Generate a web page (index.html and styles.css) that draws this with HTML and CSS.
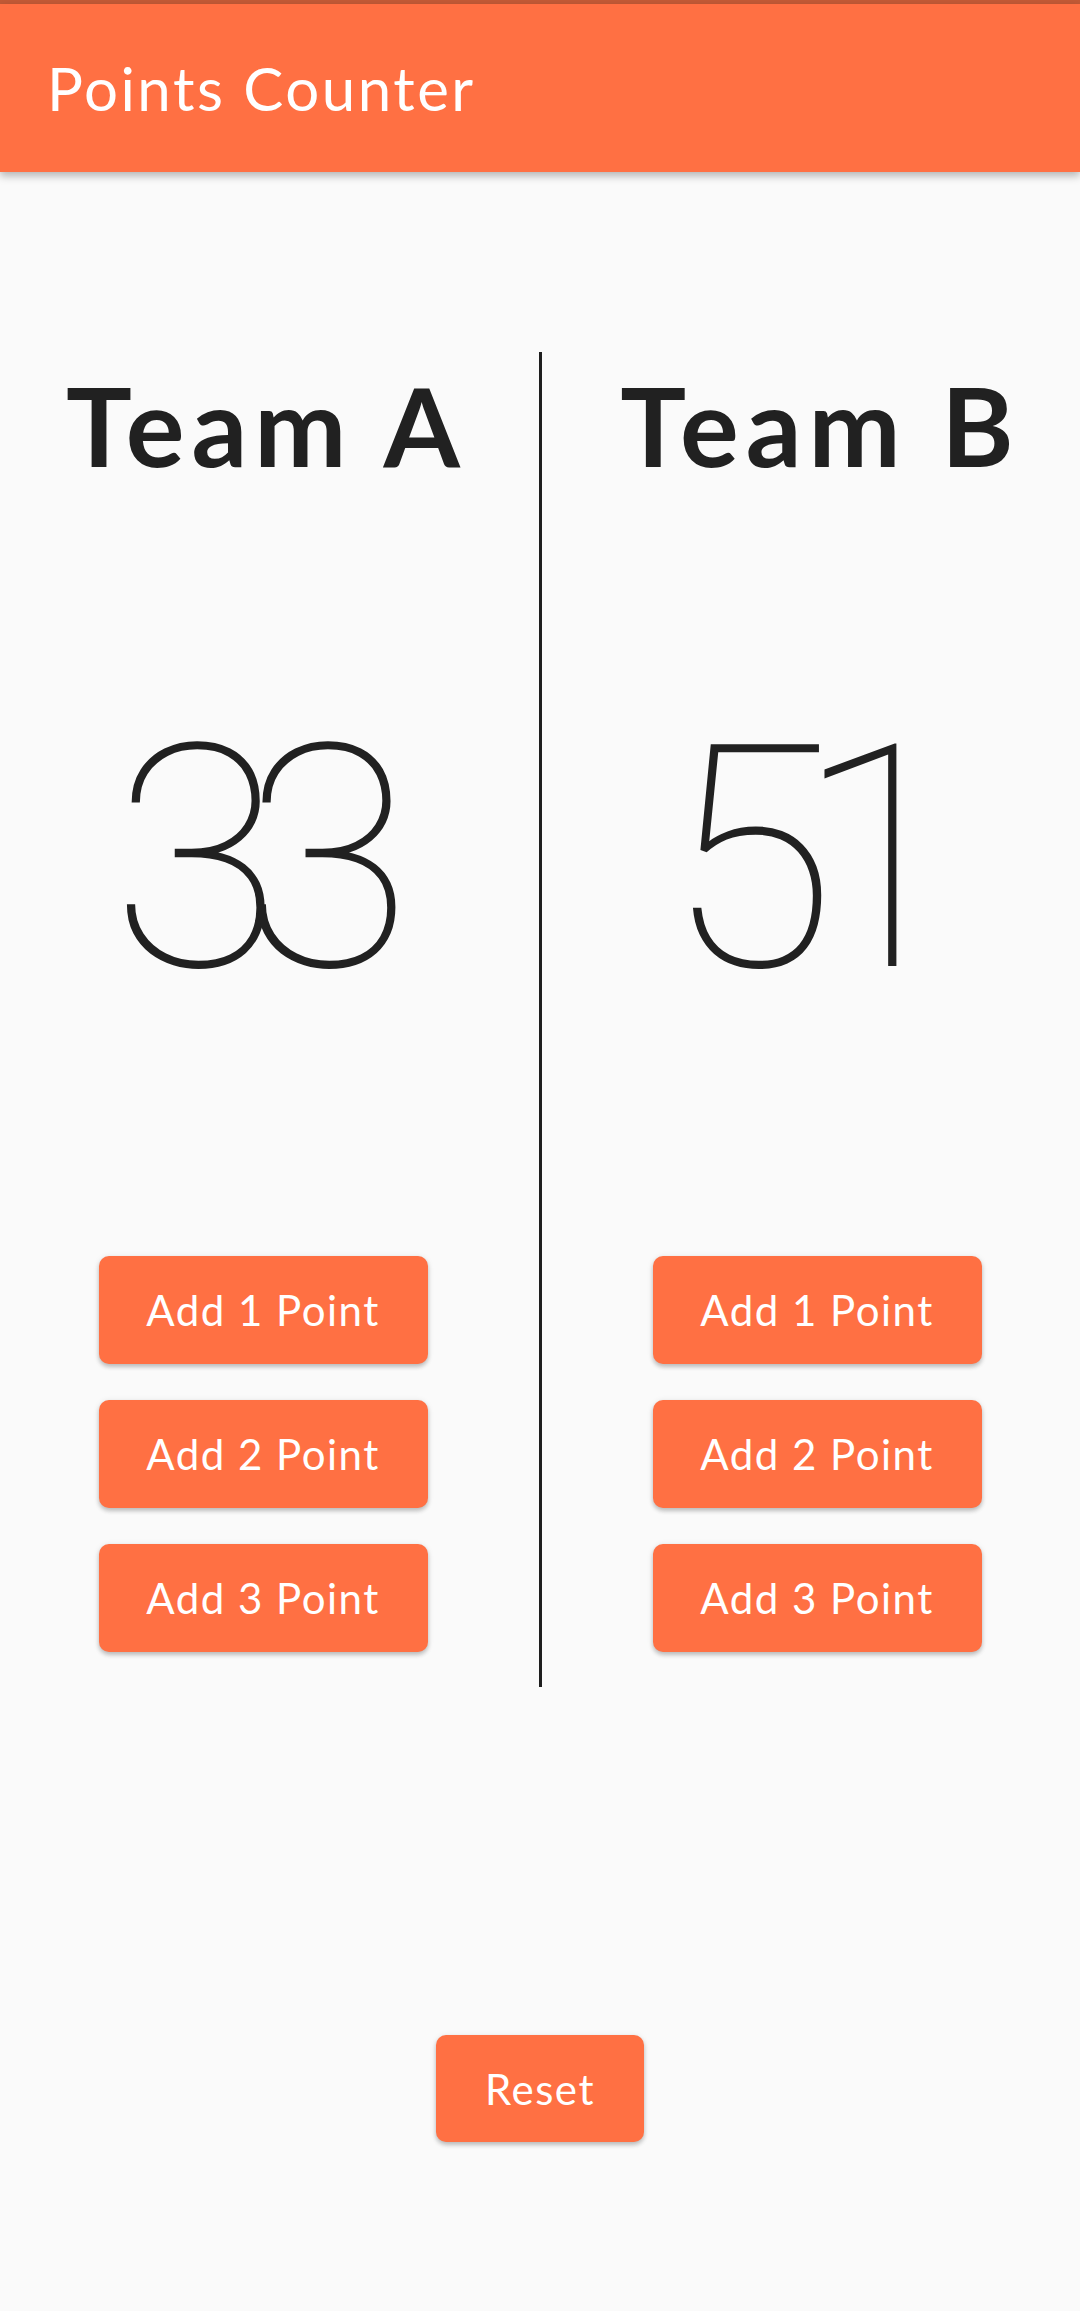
FILE: index.html
```html
<!DOCTYPE html>
<html>
<head>
<meta charset="utf-8">
<link rel="stylesheet" href="styles.css">
</head>
<body>
<div class="status"></div>
<header class="appbar"><span class="title">Points Counter</span></header>
<main class="main">
  <div class="row">
    <section class="col">
      <h1 class="team">Team A</h1>
      <div class="score">33</div>
      <div class="buttons">
        <button class="btn">Add 1 Point</button>
        <button class="btn">Add 2 Point</button>
        <button class="btn">Add 3 Point</button>
      </div>
    </section>
    <div class="divider"><div class="line"></div></div>
    <section class="col">
      <h1 class="team">Team B</h1>
      <div class="score">51</div>
      <div class="buttons">
        <button class="btn">Add 1 Point</button>
        <button class="btn">Add 2 Point</button>
        <button class="btn">Add 3 Point</button>
      </div>
    </section>
  </div>
  <div class="reset-wrap"><button class="btn reset">Reset</button></div>
</main>
</body>
</html>
```
FILE: styles.css
```css
html, body {
  margin: 0;
  padding: 0;
  background: #fafafa;
  width: 1080px;
  height: 2311px;
  overflow: hidden;
  font-family: "Lato", "Liberation Sans", sans-serif;
  color: #212121;
}
.status {
  height: 4px;
  background: #c25a36;
}
.appbar {
  height: 168px;
  background: #ff7043;
  display: flex;
  align-items: center;
  padding-left: 47px;
  box-shadow: 0 4px 8px rgba(0,0,0,0.28);
  position: relative;
  z-index: 1;
}
.title {
  color: #fff;
  font-size: 60px;
  font-weight: 400;
  letter-spacing: 2.5px;
}
.main {
  padding-top: 180px;
  display: flex;
  flex-direction: column;
}
.row {
  display: flex;
  height: 1335px;
}
.col {
  flex: 1;
  display: flex;
  flex-direction: column;
  align-items: center;
}
.divider {
  width: 28px;
  display: flex;
  justify-content: center;
}
.line {
  width: 3px;
  background: #1e1e1e;
  height: 100%;
}
.team {
  margin: 6px 0 0;
  padding-left: 7px;
  font-size: 110px;
  line-height: 132px;
  font-weight: 700;
  letter-spacing: 7px;
}
.score {
  margin-top: 214px;
  font-family: "Roboto", sans-serif;
  font-weight: 100;
  font-size: 312px;
  line-height: 312px;
  letter-spacing: -40px;
  padding-right: 42px;
}
.buttons {
  margin-top: 240px;
  display: flex;
  flex-direction: column;
  gap: 36px;
}
.btn {
  width: 329px;
  height: 108px;
  border: none;
  border-radius: 10px;
  background: #ff7043;
  color: #fff;
  font-family: "Lato", "Liberation Sans", sans-serif;
  font-size: 42px;
  letter-spacing: 1.5px;
  box-shadow: 0 3px 4px rgba(0,0,0,0.2), 0 1px 6px rgba(0,0,0,0.1);
  padding: 0;
}
.reset-wrap {
  margin-top: 348px;
  display: flex;
  justify-content: center;
}
.reset {
  width: 208px;
  height: 107px;
}
```
